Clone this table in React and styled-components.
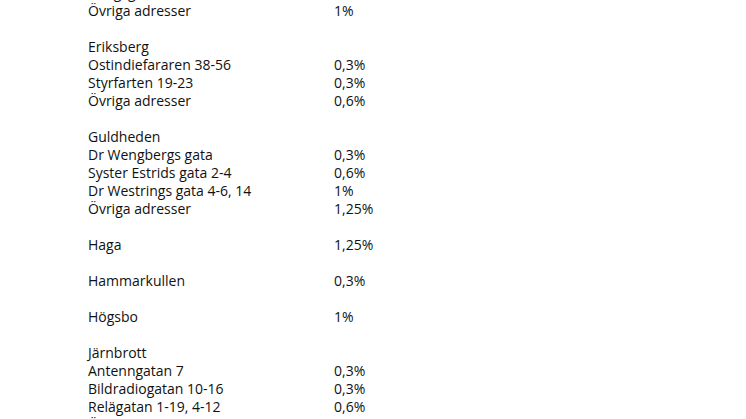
import React from 'react'
import styled, { createGlobalStyle } from 'styled-components'

const GlobalStyle = createGlobalStyle`
   html, body {
      margin: 0;
      padding: 0;
      background: #ffffff;
   }
   body {
      font-family: 'Open Sans', 'Noto Sans', Arial, sans-serif;
      color: #111111;
      overflow: hidden;
   }
`

const areas = [
   {
      rows: [
         ['Kungsgatan', ''],
         ['Övriga adresser', '1%'],
      ],
   },
   {
      title: 'Eriksberg',
      rows: [
         ['Ostindiefararen 38-56', '0,3%'],
         ['Styrfarten 19-23', '0,3%'],
         ['Övriga adresser', '0,6%'],
      ],
   },
   {
      title: 'Guldheden',
      rows: [
         ['Dr Wengbergs gata', '0,3%'],
         ['Syster Estrids gata 2-4', '0,6%'],
         ['Dr Westrings gata 4-6, 14', '1%'],
         ['Övriga adresser', '1,25%'],
      ],
   },
   { title: 'Haga', value: '1,25%', rows: [] },
   { title: 'Hammarkullen', value: '0,3%', rows: [] },
   { title: 'Högsbo', value: '1%', rows: [] },
   {
      title: 'Järnbrott',
      rows: [
         ['Antenngatan 7', '0,3%'],
         ['Bildradiogatan 10-16', '0,3%'],
         ['Relägatan 1-19, 4-12', '0,6%'],
         ['Övriga adresser', '1%'],
      ],
   },
]

export default function App() {
   return (
      <>
         <GlobalStyle />
         <Page>
            {areas.map((area, i) => (
               <Group key={i}>
                  {area.title && (
                     <Row>
                        <Name>{area.title}</Name>
                        <Value>{area.value || ''}</Value>
                     </Row>
                  )}
                  {area.rows.map(([name, value], j) => (
                     <Row key={j}>
                        <Name>{name}</Name>
                        <Value>{value}</Value>
                     </Row>
                  ))}
               </Group>
            ))}
         </Page>
      </>
   )
}

const Page = styled.div`
   margin-top: -16px;
   padding-left: 88px;
   font-size: 14px;
   line-height: 18px;
`
const Group = styled.div`
   margin-bottom: 18px;
`
const Row = styled.div`
   display: grid;
   grid-template-columns: 246px auto;
   height: 18px;
   white-space: nowrap;
`
const Name = styled.span``
const Value = styled.span``
